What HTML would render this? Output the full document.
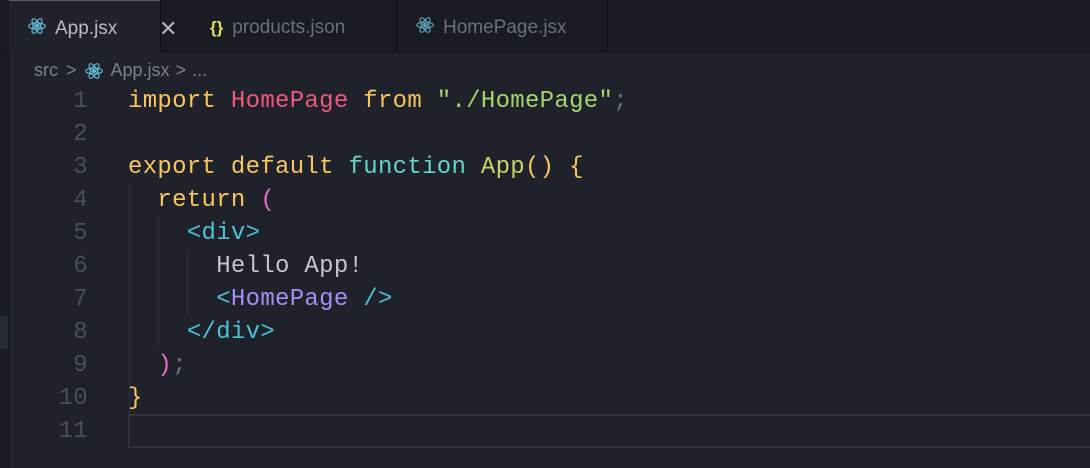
<!DOCTYPE html>
<html><head><meta charset="utf-8"><style>
*{margin:0;padding:0;box-sizing:border-box}
body{width:1090px;height:468px;background:#1f212b;overflow:hidden;position:relative;font-family:"Liberation Sans",sans-serif}
.tabbar{position:absolute;left:0;top:0;width:1090px;height:52px;background:#1a1c24;border-bottom:1px solid #15161c}
.tab{position:absolute;top:0;height:52px;padding-top:4px;font-size:19px;color:#6b6f7c;display:flex;align-items:center}
.t1{left:9px;width:151px;background:#1f212b;border-top:1px solid #5a5d66;color:#b9bcc6;height:53px}
.t2{left:160px;width:237px;border-right:1px solid #111217;border-left:1px solid #111217}
.t3{left:397px;width:211px;border-right:1px solid #111217}
.ico{display:inline-block;margin-right:9px}
.left{position:absolute;left:0;top:52px;width:9px;height:416px;background:#1a1c24;border-right:1px solid #15161a}
.crumb{position:absolute;left:34px;top:60px;font-size:18px;color:#7c808c;display:flex;align-items:center}
.code{position:absolute;left:0;top:88px;font-family:"Liberation Mono",monospace;font-size:24px;letter-spacing:0.3px}
.ln{position:absolute;left:0;width:88px;text-align:right;color:#4b4f5b}
.tx{position:absolute;left:128px;white-space:pre}
.k{color:#f8c55d}.p{color:#f0577a}.s{color:#a4d56c}.f{color:#62d6c4}.a{color:#c3d66a}
.m{color:#e56ec4}.tg{color:#4ec0d6}.c{color:#a68ff2}.w{color:#c4c5c9}.g{color:#6b6f7a}
.guide{position:absolute;width:1px;background:#2e313b}
.cur{position:absolute;left:128px;top:414px;width:962px;height:34px;border:2px solid #2f323b;border-right:none}
</style></head><body>
<div class="tabbar">
 <div class="tab t1"><span style="margin-left:19px" class="ico"><svg width="18" height="18" viewBox="-12 -12 24 24" fill="none" stroke="#61b8d0" stroke-width="1.6"><ellipse rx="11" ry="4.2"/><ellipse rx="11" ry="4.2" transform="rotate(60)"/><ellipse rx="11" ry="4.2" transform="rotate(120)"/><circle r="2" fill="#61b8d0"/></svg></span>App.jsx<span style="position:absolute;left:150px;font-size:22px;color:#b0b3bd">✕</span></div>
 <div class="tab t2"><span style="margin-left:49px;color:#dfe05a;font-weight:bold;font-size:17px" class="ico">{}</span>products.json</div>
 <div class="tab t3"><span style="margin-left:19px" class="ico"><svg width="18" height="18" viewBox="-12 -12 24 24" fill="none" stroke="#5a9db3" stroke-width="1.6"><ellipse rx="11" ry="4.2"/><ellipse rx="11" ry="4.2" transform="rotate(60)"/><ellipse rx="11" ry="4.2" transform="rotate(120)"/><circle r="2" fill="#5a9db3"/></svg></span>HomePage.jsx</div>
</div>
<div class="left"></div>
<div style="position:absolute;left:0;top:316px;width:8px;height:33px;background:#262a33"></div>
<div class="crumb">src<span style="margin:0 8px">&gt;</span><svg width="18" height="18" viewBox="-12 -12 24 24" fill="none" stroke="#61b8d0" stroke-width="1.6" style="margin-right:8px"><ellipse rx="11" ry="4.2"/><ellipse rx="11" ry="4.2" transform="rotate(60)"/><ellipse rx="11" ry="4.2" transform="rotate(120)"/><circle r="2" fill="#61b8d0"/></svg>App.jsx<span style="margin:0 6px">&gt;</span>...</div>
<div class="guide" style="left:129px;top:183px;height:231px"></div>
<div class="guide" style="left:158px;top:216px;height:132px"></div>
<div class="guide" style="left:187px;top:249px;height:66px"></div>
<div class="cur"></div>
<div class="code">
 <div class="ln" style="top:0">1</div><div class="tx" style="top:0"><span class="k">import</span> <span class="p">HomePage</span> <span class="k">from</span> <span class="s">"./HomePage"</span><span class="g">;</span></div>
 <div class="ln" style="top:33px">2</div>
 <div class="ln" style="top:66px">3</div><div class="tx" style="top:66px"><span class="k">export default</span> <span class="f">function</span> <span class="a">App</span><span class="k">() {</span></div>
 <div class="ln" style="top:99px">4</div><div class="tx" style="top:99px">  <span class="k">return</span> <span class="m">(</span></div>
 <div class="ln" style="top:132px">5</div><div class="tx" style="top:132px">    <span class="tg">&lt;div&gt;</span></div>
 <div class="ln" style="top:165px">6</div><div class="tx" style="top:165px">      <span class="w">Hello App!</span></div>
 <div class="ln" style="top:198px">7</div><div class="tx" style="top:198px">      <span class="tg">&lt;</span><span class="c">HomePage</span> <span class="tg">/&gt;</span></div>
 <div class="ln" style="top:231px">8</div><div class="tx" style="top:231px">    <span class="tg">&lt;/div&gt;</span></div>
 <div class="ln" style="top:264px">9</div><div class="tx" style="top:264px">  <span class="m">)</span><span class="g">;</span></div>
 <div class="ln" style="top:297px">10</div><div class="tx" style="top:297px"><span class="k">}</span></div>
 <div class="ln" style="top:330px">11</div>
</div>
</body></html>
